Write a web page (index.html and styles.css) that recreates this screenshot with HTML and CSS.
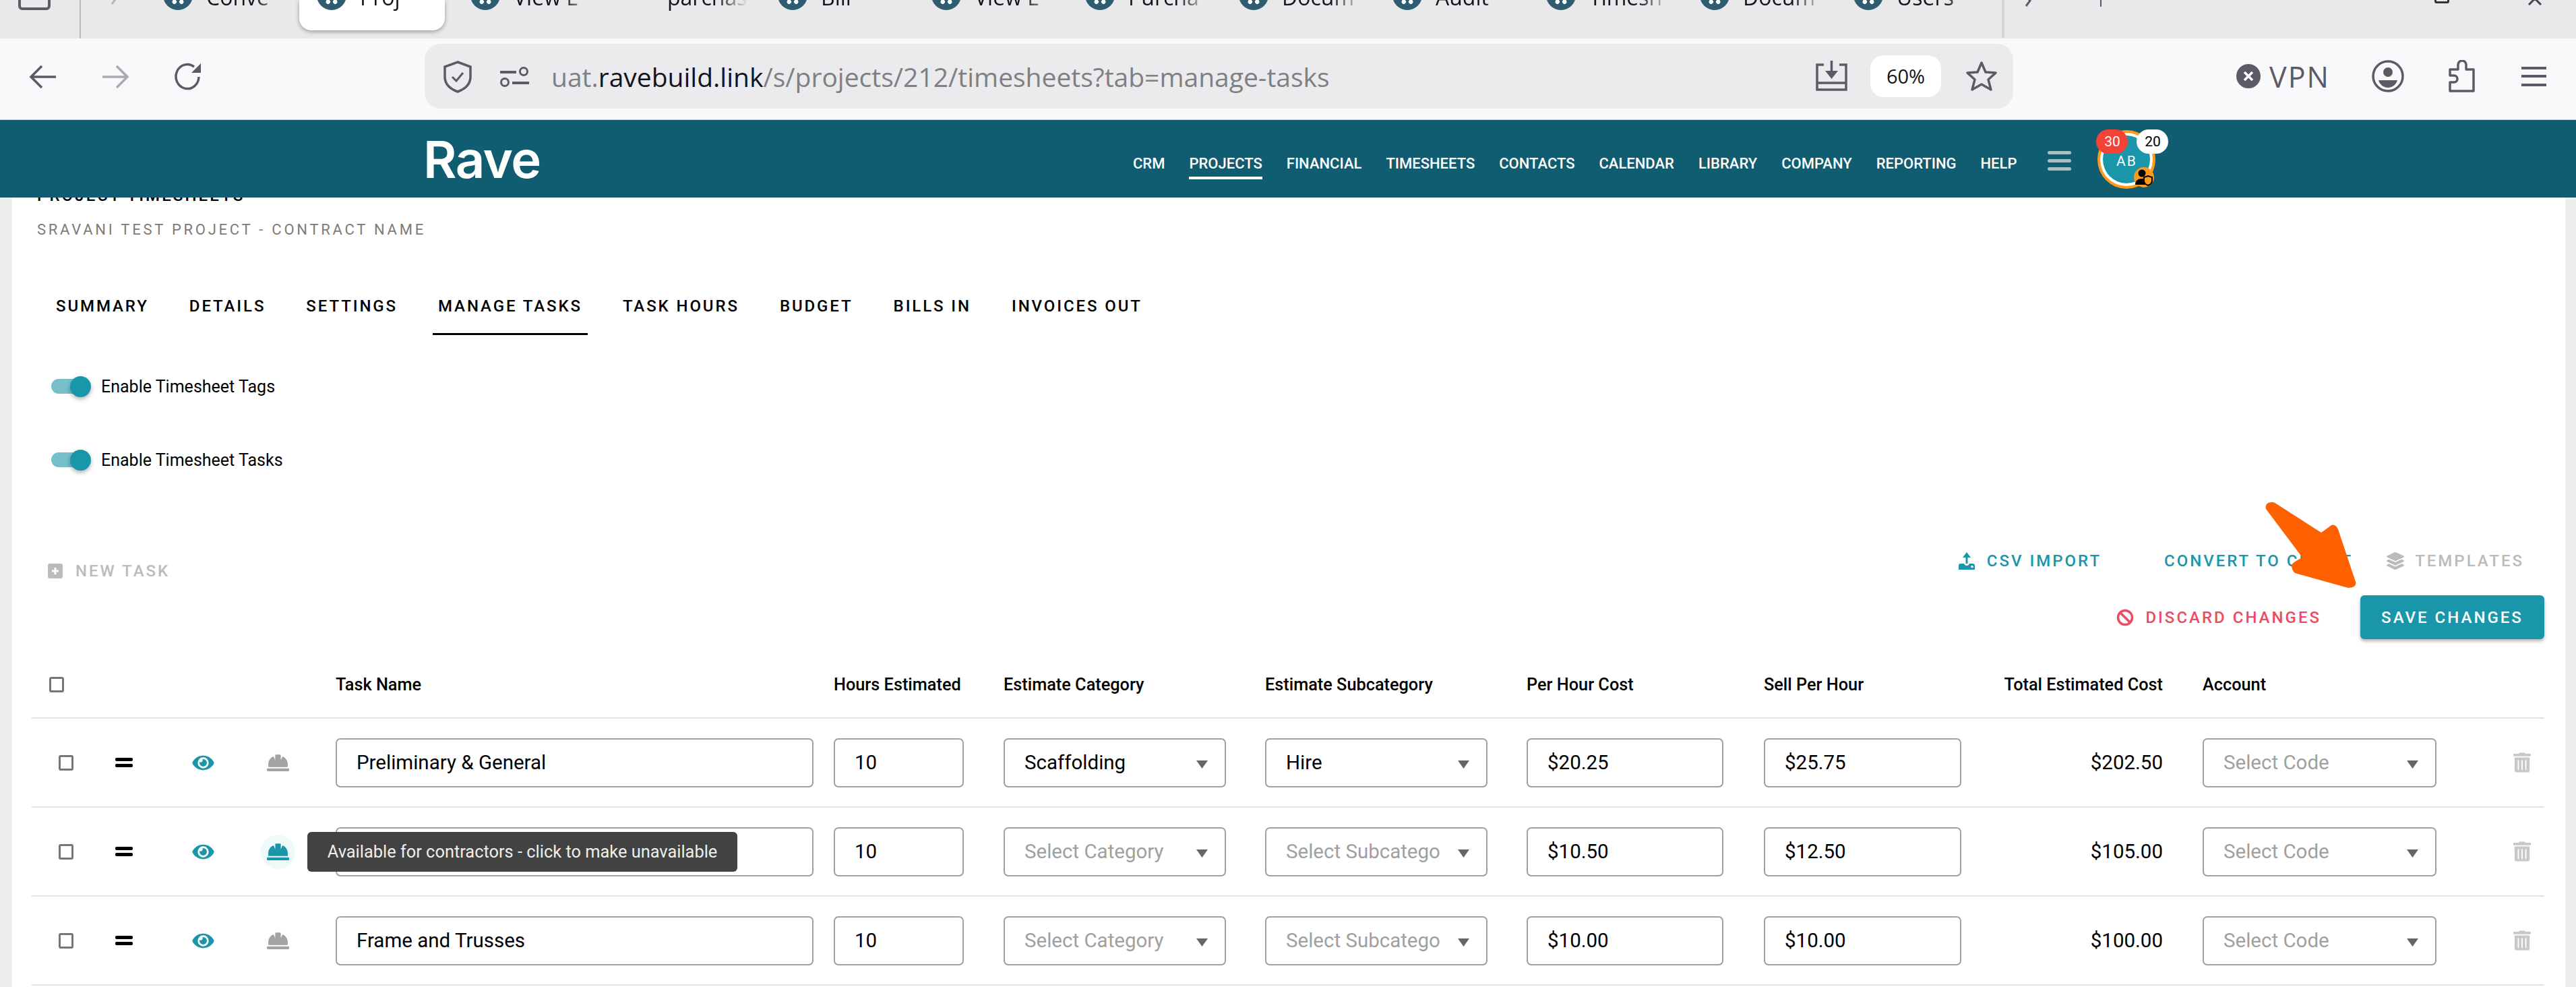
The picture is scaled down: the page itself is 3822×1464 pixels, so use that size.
FILE: index.html
```html
<!DOCTYPE html>
<html lang="en">
<head>
  <meta charset="UTF-8">
  <title>Project Timesheets - Rave</title>
  <link rel="stylesheet" href="styles.css">
</head>
<body>

<!-- browser tabs, top is cut off by the capture -->
<div class="tabstrip">
  <div class="win-icon"></div>
  <div class="strip-sep"></div>
  <svg class="strip-back" width="20" height="10" viewBox="0 0 20 10"><path d="M14 -8 L4 6" fill="none" stroke="#b4b4b8" stroke-width="3"/></svg>
  <div class="tabs">
    <div class="tab"><i class="fav"></i><span>Conve</span></div>
    <div class="tab active"><i class="fav"></i><span>Proj••</span></div>
    <div class="tab"><i class="fav"></i><span>View L</span></div>
    <div class="tab"><i class="fav nofav"></i><span>parchas</span></div>
    <div class="tab"><i class="fav"></i><span>Bill</span></div>
    <div class="tab"><i class="fav"></i><span>View L</span></div>
    <div class="tab"><i class="fav"></i><span>Purcha</span></div>
    <div class="tab"><i class="fav"></i><span>Docum</span></div>
    <div class="tab"><i class="fav"></i><span>Audit</span></div>
    <div class="tab"><i class="fav"></i><span>Timesh</span></div>
    <div class="tab"><i class="fav"></i><span>Docum</span></div>
    <div class="tab"><i class="fav"></i><span>Users</span></div>
  </div>
  <div class="strip-sep2"></div>
  <div class="strip-right">
    <svg width="20" height="10" viewBox="0 0 20 10"><path d="M6 -6 L12 1 L6 9" fill="none" stroke="#5b5b66" stroke-width="3"/></svg>
    <i class="tick"></i>
    <i class="win-restore"></i>
    <svg class="win-x" width="30" height="8" viewBox="0 0 30 8"><path d="M15 -2 L6 7 M15 -2 L24 7" fill="none" stroke="#45454d" stroke-width="3"/></svg>
  </div>
</div>

<!-- browser toolbar -->
<div class="toolbar">
  <svg class="tb-back" width="42" height="36" viewBox="0 0 42 36"><path d="M40 18H4M19 2 3 18l16 16" fill="none" stroke="#5b5b66" stroke-width="3.5"/></svg>
  <svg class="tb-fwd" width="42" height="36" viewBox="0 0 42 36"><path d="M2 18h36M23 2l16 16-16 16" fill="none" stroke="#aaaab0" stroke-width="3.5"/></svg>
  <svg class="tb-reload" width="42" height="42" viewBox="0 0 42 42"><path d="M37 21A17 18 0 1 1 30 6" fill="none" stroke="#5b5b66" stroke-width="3.5"/><path d="M40 1v14H26z" fill="#5b5b66"/></svg>

  <div class="urlbar">
    <svg class="u-shield" width="44" height="48" viewBox="0 0 44 48"><path d="M22 2 41 9v15c0 11-8 18-19 22C11 42 3 35 3 24V9z" fill="none" stroke="#5b5b66" stroke-width="3.5"/><path d="M14 24l6 6 10-12" fill="none" stroke="#5b5b66" stroke-width="3"/></svg>
    <svg class="u-slider" width="43" height="30" viewBox="0 0 43 30"><path d="M0 8h24M18 24h25" stroke="#5b5b66" stroke-width="4" fill="none"/><circle cx="35" cy="7" r="5.5" fill="none" stroke="#5b5b66" stroke-width="3"/><circle cx="7" cy="23" r="5.5" fill="none" stroke="#5b5b66" stroke-width="3"/></svg>
    <div class="url-text">uat.<b>ravebuild.link</b>/s/projects/212/timesheets?tab=manage-tasks</div>
    <svg class="u-dl" width="47" height="46" viewBox="0 0 47 46"><path d="M12 6H2v37h43V6H35M2 33h43" fill="none" stroke="#5b5b66" stroke-width="3.5"/><path d="M23.500 0v16" stroke="#5b5b66" stroke-width="3.500"/><path d="M14 15h19l-9.500 12z" fill="#5b5b66"/></svg>
    <div class="zoom-pill">60%</div>
    <svg class="u-star" width="48" height="46" viewBox="0 0 48 46"><path d="M24 3l6 14 15 1-11 10 4 15-14-8-14 8 4-15L3 18l15-1z" fill="none" stroke="#5b5b66" stroke-width="3.500" stroke-linejoin="round"/></svg>
  </div>

  <div class="vpn">
    <svg width="36" height="36" viewBox="0 0 36 36"><circle cx="18" cy="18" r="18" fill="#5b5b66"/><path d="M12 12l12 12M24 12 12 24" stroke="#fff" stroke-width="3.500"/></svg>
    <span>VPN</span>
  </div>
  <svg class="tb-profile" width="50" height="48" viewBox="0 0 50 48"><circle cx="25" cy="24" r="22" fill="none" stroke="#5b5b66" stroke-width="3.500"/><circle cx="25" cy="18" r="7" fill="#5b5b66"/><path d="M11 30h28c-2 7-8 11-14 11s-12-4-14-11z" fill="#5b5b66"/></svg>
  <svg class="tb-puzzle" width="39" height="48" viewBox="0 0 39 48"><path d="M14 14V7a6 6 0 0 1 12 0v7h11v32H2V33h6a5 5 0 0 0 0-10H2v-9z" fill="none" stroke="#5b5b66" stroke-width="3.500" stroke-linejoin="round"/></svg>
  <div class="tb-menu"><i></i><i></i><i></i></div>
</div>

<div class="app">
  <!-- app header sits over the scrolled page -->
  <header class="appbar">
    <div class="logo">Rave</div>
    <nav class="mainnav">
      <a>CRM</a>
      <a class="on">PROJECTS</a>
      <a>FINANCIAL</a>
      <a>TIMESHEETS</a>
      <a>CONTACTS</a>
      <a>CALENDAR</a>
      <a>LIBRARY</a>
      <a>COMPANY</a>
      <a>REPORTING</a>
      <a>HELP</a>
    </nav>
    <div class="burger"><i></i><i></i><i></i></div>
    <div class="avatar">
      <div class="avatar-in">AB</div>
      <span class="badge red">30</span>
      <span class="badge white">20</span>
      <span class="role">
        <svg width="26" height="26" viewBox="0 0 26 26"><circle cx="10" cy="7" r="5.500"/><path d="M0 24c0-6 4-9 10-9 3 0 5 .5 6 1.500V24z"/><path d="M19 11l6 2v5c0 4-3 6-6 7-3-1-6-3-6-7v-5z" fill="#ff9a1a" stroke="#000" stroke-width="2"/></svg>
      </span>
    </div>
  </header>

  <main class="page">
    <h1 class="title">PROJECT TIMESHEETS</h1>
    <div class="subtitle">SRAVANI TEST PROJECT - CONTRACT NAME</div>

    <div class="tabnav">
      <a>SUMMARY</a>
      <a>DETAILS</a>
      <a>SETTINGS</a>
      <a class="on">MANAGE TASKS</a>
      <a>TASK HOURS</a>
      <a>BUDGET</a>
      <a>BILLS IN</a>
      <a>INVOICES OUT</a>
    </div>

    <div class="toggle-row first"><span class="toggle"><i></i></span><label>Enable Timesheet Tags</label></div>
    <div class="toggle-row"><span class="toggle"><i></i></span><label>Enable Timesheet Tasks</label></div>

    <div class="actions">
      <a class="act new">
        <svg width="22" height="22" viewBox="0 0 22 22"><rect width="22" height="22" rx="3" fill="#bbb"/><path d="M11 6v10M6 11h10" stroke="#fff" stroke-width="3"/></svg>
        NEW TASK
      </a>
      <div class="act-right">
        <a class="act teal csv">
          <svg width="26" height="26" viewBox="0 0 26 26"><path d="M13 0 7 8h4.500v9h3V8H19z" fill="#1a96ab"/><path d="M1 26v-6c0-2 1-3 3-3h5c1 2 2 3 4 3s3-1 4-3h5c2 0 3 1 3 3v6z" fill="#1a96ab"/><circle cx="21" cy="21.500" r="1.800" fill="#fff"/></svg>
          CSV IMPORT
        </a>
        <a class="act teal convert">CONVERT TO CLIENT</a>
        <a class="act muted tpl">
          <svg width="26" height="26" viewBox="0 0 512 512"><path fill="#bbb" d="M12.410 148.020l232.940 105.670c6.800 3.090 14.490 3.090 21.290 0l232.940-105.670c16.550-7.510 16.550-32.520 0-40.030L266.650 2.310a25.607 25.607 0 0 0-21.290 0L12.410 107.980c-16.550 7.510-16.550 32.530 0 40.040zm487.180 88.280l-58.090-26.330-161.640 73.270c-7.560 3.430-15.590 5.170-23.860 5.170s-16.290-1.740-23.860-5.170L70.510 209.970l-58.100 26.330c-16.550 7.500-16.550 32.500 0 40l232.940 105.590c6.800 3.080 14.490 3.080 21.290 0L499.590 276.300c16.550-7.500 16.550-32.500 0-40zm0 127.800l-57.870-26.230-161.860 73.370c-7.560 3.430-15.590 5.170-23.860 5.170s-16.290-1.740-23.860-5.170L70.290 337.870 12.410 364.100c-16.550 7.500-16.550 32.500 0 40l232.940 105.590c6.800 3.080 14.490 3.080 21.290 0L499.590 404.100c16.550-7.500 16.550-32.500 0-40z"/></svg>
          TEMPLATES
        </a>
      </div>
    </div>
    <div class="actions2">
      <a class="act discard">
        <svg width="26" height="26" viewBox="0 0 26 26"><circle cx="13" cy="13" r="10.500" fill="none" stroke="#ee4a62" stroke-width="3.500"/><path d="M6 6l14 14" stroke="#ee4a62" stroke-width="3.500"/></svg>
        DISCARD CHANGES
      </a>
      <button class="save">SAVE CHANGES</button>
    </div>

    <div class="grid head">
      <div class="c-check"><span class="box"></span></div>
      <div></div><div></div><div></div>
      <div>Task Name</div>
      <div>Hours Estimated</div>
      <div>Estimate Category</div>
      <div>Estimate Subcategory</div>
      <div>Per Hour Cost</div>
      <div>Sell Per Hour</div>
      <div class="c-total">Total Estimated Cost</div>
      <div>Account</div>
      <div></div>
    </div>

    <div class="grid row">
      <div class="c-check"><span class="box"></span></div>
      <div><span class="drag"><i></i><i></i></span></div>
      <div><svg class="ic-eye" width="33" height="29" viewBox="0 0 576 512"><use href="#eye"/></svg></div>
      <div class="c-hat"><svg class="ic-hat" width="33" height="33" viewBox="0 0 512 512"><use href="#hat"/></svg></div>
      <div class="field w-name">Preliminary &amp; General</div>
      <div class="field w-hours">10</div>
      <div class="field sel w-cat"><span>Scaffolding</span><svg class="caret" width="19" height="12" viewBox="0 0 19 12"><path d="M1 0h17L9.500 12z"/></svg></div>
      <div class="field sel w-cat"><span>Hire</span><svg class="caret" width="19" height="12" viewBox="0 0 19 12"><path d="M1 0h17L9.500 12z"/></svg></div>
      <div class="field w-per">$20.25</div>
      <div class="field w-sell">$25.75</div>
      <div class="c-total val">$202.50</div>
      <div class="field sel w-acc hint"><span>Select Code</span><svg class="caret" width="19" height="12" viewBox="0 0 19 12"><path d="M1 0h17L9.500 12z"/></svg></div>
      <div><svg class="ic-trash" width="26" height="30" viewBox="0 0 448 512"><use href="#trash"/></svg></div>
    </div>

    <div class="grid row">
      <div class="c-check"><span class="box"></span></div>
      <div><span class="drag"><i></i><i></i></span></div>
      <div><svg class="ic-eye" width="33" height="29" viewBox="0 0 576 512"><use href="#eye"/></svg></div>
      <div class="c-hat"><span class="hat-on"><svg class="ic-hat teal-hat" width="33" height="33" viewBox="0 0 512 512"><use href="#hat"/></svg></span></div>
      <div class="field w-name tip-host"><div class="tooltip">Available for contractors - click to make unavailable</div></div>
      <div class="field w-hours">10</div>
      <div class="field sel w-cat hint"><span>Select Category</span><svg class="caret" width="19" height="12" viewBox="0 0 19 12"><path d="M1 0h17L9.500 12z"/></svg></div>
      <div class="field sel w-cat hint"><span>Select Subcategory</span><svg class="caret" width="19" height="12" viewBox="0 0 19 12"><path d="M1 0h17L9.500 12z"/></svg></div>
      <div class="field w-per">$10.50</div>
      <div class="field w-sell">$12.50</div>
      <div class="c-total val">$105.00</div>
      <div class="field sel w-acc hint"><span>Select Code</span><svg class="caret" width="19" height="12" viewBox="0 0 19 12"><path d="M1 0h17L9.500 12z"/></svg></div>
      <div><svg class="ic-trash" width="26" height="30" viewBox="0 0 448 512"><use href="#trash"/></svg></div>
    </div>

    <div class="grid row">
      <div class="c-check"><span class="box"></span></div>
      <div><span class="drag"><i></i><i></i></span></div>
      <div><svg class="ic-eye" width="33" height="29" viewBox="0 0 576 512"><use href="#eye"/></svg></div>
      <div class="c-hat"><svg class="ic-hat" width="33" height="33" viewBox="0 0 512 512"><use href="#hat"/></svg></div>
      <div class="field w-name">Frame and Trusses</div>
      <div class="field w-hours">10</div>
      <div class="field sel w-cat hint"><span>Select Category</span><svg class="caret" width="19" height="12" viewBox="0 0 19 12"><path d="M1 0h17L9.500 12z"/></svg></div>
      <div class="field sel w-cat hint"><span>Select Subcategory</span><svg class="caret" width="19" height="12" viewBox="0 0 19 12"><path d="M1 0h17L9.500 12z"/></svg></div>
      <div class="field w-per">$10.00</div>
      <div class="field w-sell">$10.00</div>
      <div class="c-total val">$100.00</div>
      <div class="field sel w-acc hint"><span>Select Code</span><svg class="caret" width="19" height="12" viewBox="0 0 19 12"><path d="M1 0h17L9.500 12z"/></svg></div>
      <div><svg class="ic-trash" width="26" height="30" viewBox="0 0 448 512"><use href="#trash"/></svg></div>
    </div>
  </main>

  <!-- annotation arrow drawn on the screenshot -->
  <svg class="arrow" width="150" height="140" viewBox="0 0 150 140"><path d="M14 1Q5 2 7 11L61 83Q43 92 45 96Q46 103 50 106L129 128Q142 128 140 119L114 41Q110 33 104 35L89 46L22 3Q18 0 14 1z" fill="#ff6000"/></svg>
</div>

<svg class="defs" width="0" height="0">
  <symbol id="eye" viewBox="0 0 576 512"><path d="M572.520 241.400C518.290 135.590 410.930 64 288 64S57.680 135.640 3.480 241.410a32.350 32.350 0 0 0 0 29.190C57.710 376.410 165.070 448 288 448s230.320-71.640 284.520-177.410a32.350 32.350 0 0 0 0-29.190zM288 400a144 144 0 1 1 144-144 143.930 143.930 0 0 1-144 144zm0-240a95.310 95.310 0 0 0-25.310 3.790 47.850 47.850 0 0 1-66.900 66.900A95.780 95.780 0 1 0 288 160z"/></symbol>
  <symbol id="hat" viewBox="0 0 512 512"><path d="M480 288c0-80.250-49.280-148.920-119.190-177.620L320 192V80a16 16 0 0 0-16-16h-96a16 16 0 0 0-16 16v112l-40.810-81.620C81.280 139.080 32 207.750 32 288v64h448zm16 96H16a16 16 0 0 0-16 16v32a16 16 0 0 0 16 16h480a16 16 0 0 0 16-16v-32a16 16 0 0 0-16-16z"/></symbol>
  <symbol id="trash" viewBox="0 0 448 512"><path d="M32 464a48 48 0 0 0 48 48h288a48 48 0 0 0 48-48V128H32zm272-256a16 16 0 0 1 32 0v224a16 16 0 0 1-32 0zm-96 0a16 16 0 0 1 32 0v224a16 16 0 0 1-32 0zm-96 0a16 16 0 0 1 32 0v224a16 16 0 0 1-32 0zM432 32H312l-9.400-18.700A24 24 0 0 0 281.100 0H166.800a23.720 23.720 0 0 0-21.400 13.300L136 32H16A16 16 0 0 0 0 48v32a16 16 0 0 0 16 16h416a16 16 0 0 0 16-16V48a16 16 0 0 0-16-16z"/></symbol>
</svg>

</body>
</html>
```

FILE: styles.css
```css
* { box-sizing: border-box; }

html, body {
  margin: 0;
  padding: 0;
  height: 100%;
  overflow: hidden;
  background: #fff;
  font-family: Roboto, sans-serif;
  color: #000;
}

a { display: block; }

/* browser tab strip */
.tabstrip {
  height: 57px;
  background: #e9e9eb;
  display: flex;
  overflow: hidden;
}
.win-icon {
  width: 48px;
  height: 30px;
  margin: -15px 0 0 27px;
  border: 4px solid #5b5b66;
  border-radius: 6px;
}
.strip-sep {
  width: 2px;
  height: 57px;
  background: #bbb;
  margin-left: 43px;
}
.strip-back { margin-left: 40px; flex: none; width: 24px; }
.tabs {
  display: flex;
  gap: 12px;
  margin-left: 32px;
  width: 2754px;
  flex: none;
}
.tab {
  width: 216px;
  flex: none;
  height: 45px;
  display: flex;
  padding-left: 26px;
  gap: 20px;
  font-family: "Open Sans", sans-serif;
  font-size: 32px;
  line-height: 44px;
  overflow: hidden;
}
.tab span {
  margin-top: -26px;
  white-space: nowrap;
  height: 60px;
  -webkit-mask-image: linear-gradient(to right, #000 60%, transparent 100%);
  mask-image: linear-gradient(to right, #000 60%, transparent 100%);
  width: 120px;
  overflow: hidden;
  color: #15141a;
}
.tab.active {
  background: #fff;
  border-radius: 0 0 18px 18px;
  box-shadow: 0 2px 6px rgba(0,0,0,.35);
}
.fav {
  width: 44px;
  height: 44px;
  flex: none;
  margin-top: -29px;
  border-radius: 50%;
  background:
    radial-gradient(circle at 38% 72%, #fff 3px, transparent 3.5px),
    radial-gradient(circle at 62% 72%, #fff 3px, transparent 3.5px),
    #2f5c70;
}
.nofav { visibility: hidden; }
.strip-sep2 {
  width: 4px;
  height: 56px;
  background: #d4d4d6;
  flex: none;
}
.strip-right {
  flex: 1;
  display: flex;
  align-items: flex-start;
  padding-left: 26px;
}
.tick {
  width: 2px;
  height: 10px;
  background: #5b5b66;
  margin-left: 96px;
}
.win-restore {
  width: 22px;
  height: 16px;
  margin: -11px 0 0 494px;
  border: 3px solid #333;
  border-radius: 3px;
}
.win-x { margin-left: 112px; }

/* browser toolbar */
.toolbar {
  height: 121px;
  background: #f9f9fb;
  border-bottom: 1px solid #ccc;
  display: flex;
  align-items: center;
  padding-left: 43px;
}
.toolbar svg { flex: none; }
.tb-back { margin-top: -6px; }
.tb-fwd { margin: -6px 0 0 65px; }
.tb-reload { margin: -6px 0 0 66px; }
.urlbar {
  width: 2357px;
  height: 96px;
  margin: -8px 0 0 330px;
  background: #ebebed;
  border-radius: 24px;
  display: flex;
  align-items: center;
  padding: 0 23px 0 27px;
}
.u-shield { margin-top: 2px; }
.u-slider { margin: 2px 0 0 41px; }
.url-text {
  flex: 1;
  margin-left: 33px;
  font-family: "Open Sans", sans-serif;
  font-size: 39px;
  color: #7f7f84;
  white-space: nowrap;
}
.url-text b { font-weight: 400; color: #15141a; }
.zoom-pill {
  width: 105px;
  height: 62px;
  margin-left: 34px;
  background: #fff;
  border-radius: 20px;
  font-family: "Open Sans", sans-serif;
  font-size: 29px;
  line-height: 62px;
  text-align: center;
  color: #15141a;
}
.u-star { margin-left: 36px; }
.vpn {
  display: flex;
  align-items: center;
  gap: 13px;
  margin: -8px 0 0 331px;
  font-family: "Open Sans", sans-serif;
  font-size: 43px;
  letter-spacing: 2px;
  color: #5b5b66;
}
.vpn span { width: 90px; }
.tb-profile { margin: -8px 0 0 61px; }
.tb-puzzle { margin: -8px 0 0 65px; }
.tb-menu {
  width: 37px;
  margin: -8px 0 0 69px;
  display: flex;
  flex-direction: column;
  gap: 8.500px;
}
.tb-menu i {
  display: block;
  height: 4px;
  background: #5b5b66;
}

/* app */
.app {
  position: relative;
  height: 1286px;
  background: #eee;
  overflow: hidden;
}
.appbar {
  position: absolute;
  top: 0;
  left: 0;
  right: 0;
  height: 115px;
  background: #105c70;
  z-index: 5;
  display: flex;
  align-items: center;
  padding-left: 628px;
}
.logo {
  font-family: Inter, sans-serif;
  font-size: 76px;
  font-weight: 600;
  line-height: 80px;
  color: #fff;
  width: 175px;
  letter-spacing: -1.500px;
}
.mainnav {
  display: flex;
  gap: 36px;
  margin-left: 878px;
}
.mainnav a {
  font-size: 22px;
  font-weight: 500;
  line-height: 28px;
  color: #fff;
  padding: 24px 0 5px;
  border-bottom: 4px solid transparent;
}
.mainnav a.on { border-bottom-color: #fff; }
.burger {
  margin: 5px 0 0 46px;
  width: 35px;
  display: flex;
  flex-direction: column;
  gap: 7px;
}
.burger i {
  display: block;
  height: 5px;
  border-radius: 3px;
  background: #a5c0c7;
}
.avatar {
  position: relative;
  margin: 1px 0 0 39px;
  width: 86px;
  height: 87px;
  border-radius: 50%;
  background: #ff9a1a;
  padding: 4px;
}
.avatar-in {
  width: 100%;
  height: 100%;
  border-radius: 50%;
  background: #1a96ab;
  border: 4px solid #fff;
  color: #fff;
  font-size: 21px;
  letter-spacing: 2px;
  text-align: center;
  line-height: 76px;
}
.badge {
  position: absolute;
  top: -1px;
  width: 47px;
  height: 36px;
  border-radius: 18px;
  font-size: 21px;
  line-height: 36px;
  text-align: center;
}
.badge.red { left: -2px; background: #f44336; color: #fff; }
.badge.white { left: 58px; background: #fff; color: #000; }
.role {
  position: absolute;
  left: 54px;
  top: 55px;
  width: 30px;
  height: 30px;
  border-radius: 50%;
  background: #ff9a1a;
  display: flex;
  align-items: center;
  justify-content: center;
}

.page {
  margin: 0 16px 0 18px;
  height: 100%;
  background: #fff;
  padding: 98px 31px 0 29px;
}
.title {
  margin: 0 0 23px 8px;
  font-size: 24px;
  font-weight: 500;
  line-height: 28px;
  letter-spacing: 3.100px;
}
.subtitle {
  margin-left: 8px;
  font-size: 22px;
  line-height: 28px;
  letter-spacing: 3.750px;
  color: #7f7a75;
}

.tabnav {
  display: flex;
  gap: 44px;
  margin: 63px 0 0 28px;
}
.tabnav a {
  font-size: 24px;
  font-weight: 500;
  line-height: 28px;
  letter-spacing: 2.900px;
  padding: 22px 8px 26px;
  border-bottom: 3px solid transparent;
}
.tabnav a.on { border-bottom-color: #000; }

.toggle-row {
  height: 40px;
  margin-top: 69px;
  padding-left: 29px;
  display: flex;
  align-items: center;
  font-size: 25px;
}
.toggle-row.first { margin-top: 56px; }
.toggle {
  position: relative;
  width: 54px;
  height: 22px;
  margin-right: 20px;
  border-radius: 11px;
  background: #76bfcb;
}
.toggle i {
  position: absolute;
  right: -5px;
  top: -4.500px;
  width: 31px;
  height: 31px;
  border-radius: 50%;
  background: #1a96ab;
  box-shadow: 0 3px 6px rgba(0,0,0,.3);
}

.actions {
  height: 40px;
  margin-top: 110px;
  display: flex;
  justify-content: space-between;
  align-items: center;
}
.act {
  display: flex;
  align-items: center;
  font-size: 24px;
  font-weight: 500;
  letter-spacing: 3px;
  line-height: 28px;
}
.new { color: #bbb; gap: 19px; margin: 30px 0 0 24px; }
.teal { color: #1a96ab; }
.muted { color: #bbb; }
.act-right {
  display: flex;
  align-items: center;
  padding-right: 30px;
}
.csv { gap: 17px; }
.convert { margin-left: 93px; }
.tpl { gap: 16px; margin-left: 50px; }
.actions2 {
  height: 65px;
  margin-top: 31px;
  display: flex;
  justify-content: flex-end;
  align-items: center;
}
.discard { color: #ee4a62; gap: 17px; }
.save {
  width: 273px;
  height: 65px;
  margin-left: 58px;
  border: 0;
  border-radius: 6px;
  background: #1a96ab;
  color: #fff;
  font-family: Roboto, sans-serif;
  font-size: 24px;
  font-weight: 500;
  letter-spacing: 3px;
  box-shadow: 0 3px 5px rgba(0,0,0,.3);
}

/* task table */
.grid {
  display: grid;
  grid-template-columns: 124px 114px 111px 102px 739px 252px 388px 388px 352px 353px 298px 461px 46px;
  align-items: center;
}
.head {
  height: 100px;
  margin-top: 18px;
  border-bottom: 2px solid #e2e2e2;
  font-size: 25.300px;
  font-weight: 500;
}
.head .c-check { padding-left: 26px; }
.head .c-check, .row .c-check { display: flex; }
.row {
  height: 132px;
  border-bottom: 2px solid #e2e2e2;
}
.row .c-check { padding-left: 40px; }
.box {
  width: 22px;
  height: 23px;
  border: 3px solid #777;
  border-radius: 3px;
}
.c-total { text-align: right; padding-right: 59px; }
.val { font-size: 29.500px; }
.drag {
  display: flex;
  flex-direction: column;
  gap: 4px;
  width: 26px;
}
.drag i {
  display: block;
  height: 5px;
  background: #000;
  border-radius: 2px;
}
.ic-eye { display: block; fill: #1a96ab; }
.ic-hat { display: block; fill: #a3a3a3; }
.teal-hat { fill: #1a96ab; }
.hat-on {
  display: flex;
  align-items: center;
  justify-content: center;
  width: 51px;
  height: 51px;
  margin-left: -9px;
  border-radius: 50%;
  background: #f0f9fa;
}
.ic-trash { display: block; fill: #c8c8c8; }

.field {
  height: 73px;
  padding-left: 29px;
  border: 2px solid #a0a0a0;
  border-radius: 7px;
  background: #fff;
  font-size: 29.500px;
  line-height: 69px;
  white-space: nowrap;
}
.w-name { width: 709px; }
.w-hours { width: 193px; }
.w-cat { width: 330px; }
.w-per { width: 292px; }
.w-sell { width: 293px; }
.w-acc { width: 347px; }
.sel {
  display: flex;
  align-items: center;
  padding-right: 24px;
}
.sel span {
  flex: 1;
  overflow: hidden;
  margin-right: 25px;
}
.caret { flex: none; fill: #666; margin-top: 6px; }
.hint { color: #a0a0a0; }

.tip-host { position: relative; }
.tooltip {
  position: absolute;
  left: -44px;
  top: 5px;
  width: 638px;
  height: 59px;
  border-radius: 6px;
  background: #424242;
  color: #eee;
  font-size: 25.400px;
  line-height: 59px;
  text-align: center;
}

.arrow {
  position: absolute;
  left: 3355px;
  top: 566px;
  z-index: 6;
}
.defs { position: absolute; }
```
